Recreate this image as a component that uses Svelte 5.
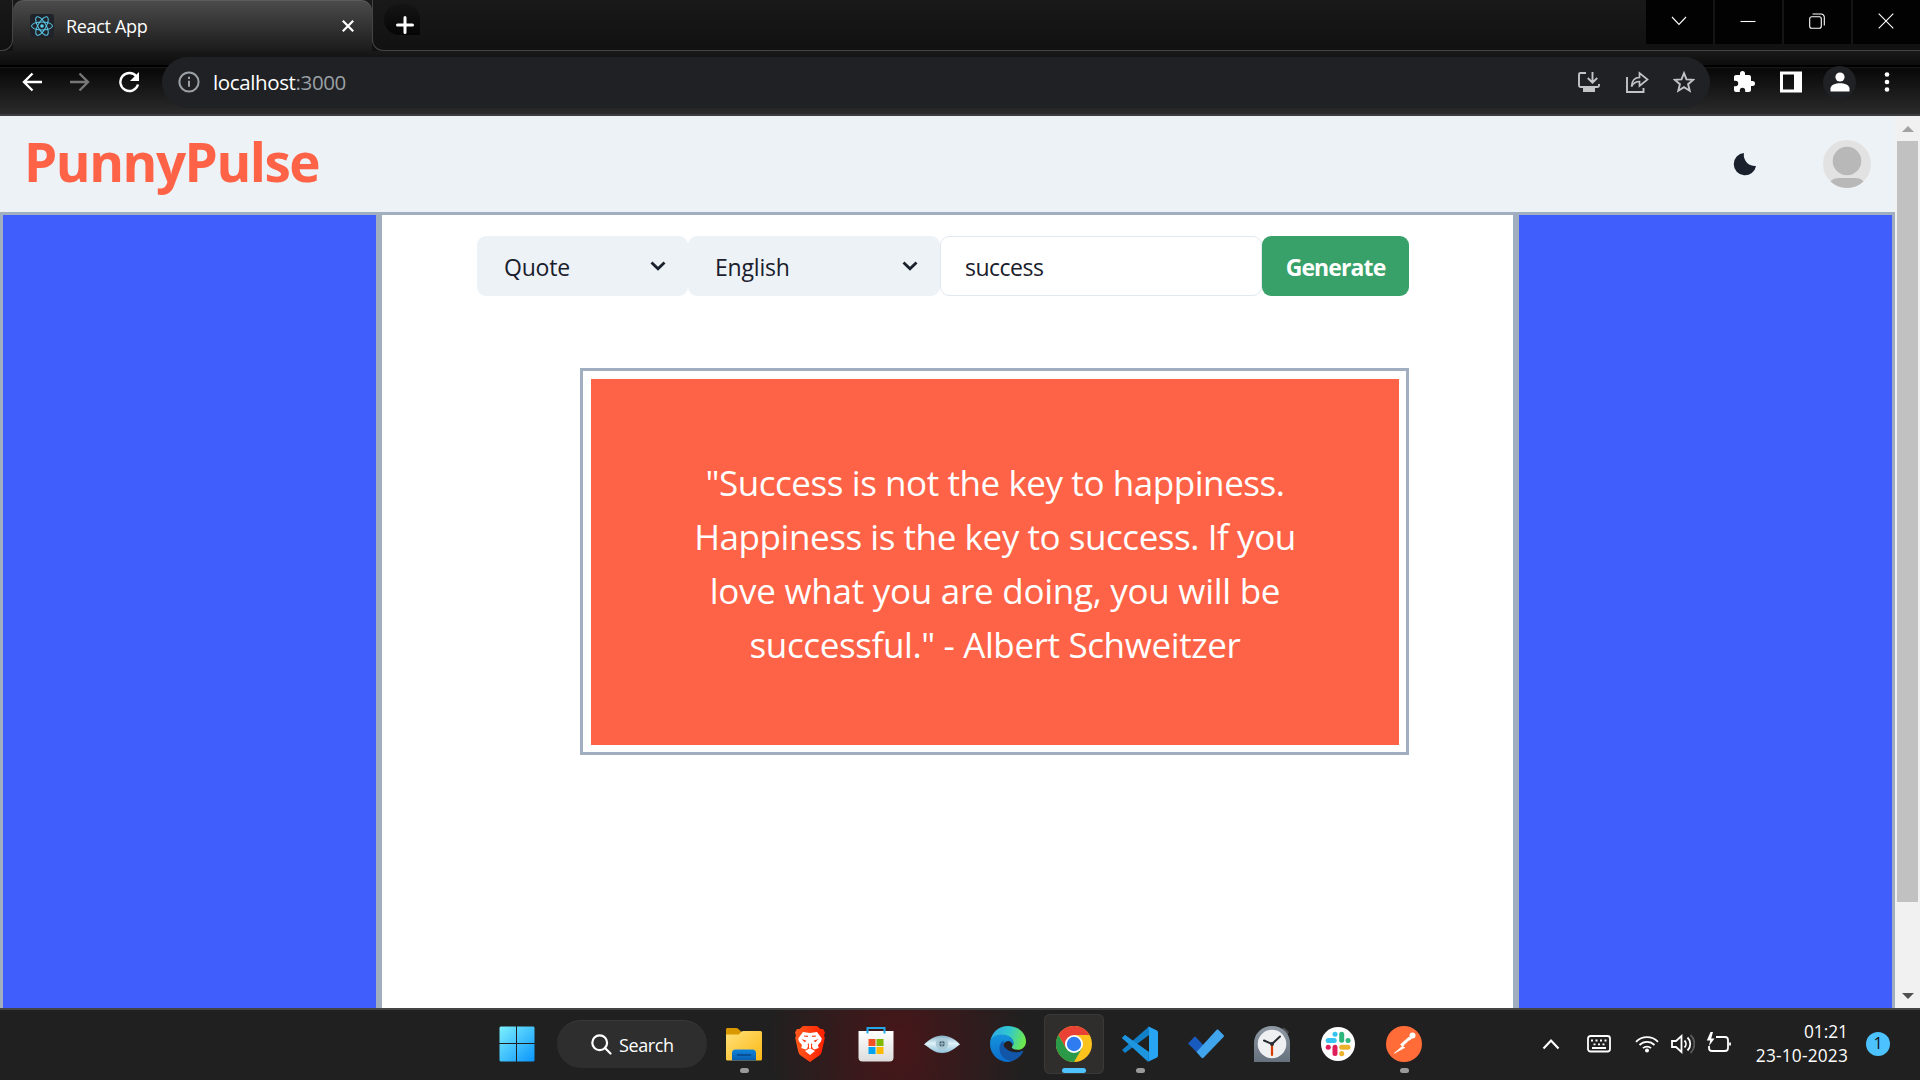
<script>
  // Tracking is in px and keeps each line at its intended measure.
  const quote = [
    { text: '"Success is not the key to happiness.', tracking: -0.43 },
    { text: 'Happiness is the key to success. If you', tracking: -0.44 },
    { text: 'love what you are doing, you will be', tracking: -0.27 },
    { text: 'successful." - Albert Schweitzer', tracking: -0.38 }
  ];
</script>

<div class="screen">
  <div class="strip">
    <div class="curve left"></div>
    <div class="tab">
      <span class="favicon">
        <svg width="24" height="24" viewBox="0 0 24 24" fill="none" stroke="#5ccfee" stroke-width="1">
          <ellipse cx="12" cy="12" rx="10.5" ry="4" />
          <ellipse cx="12" cy="12" rx="10.5" ry="4" transform="rotate(60 12 12)" />
          <ellipse cx="12" cy="12" rx="10.5" ry="4" transform="rotate(120 12 12)" />
          <circle cx="12" cy="12" r="1.8" fill="#5ccfee" stroke="none" />
        </svg>
      </span>
      <span class="tabname">React App</span>
      <svg class="close" width="14" height="14" viewBox="0 0 14 14" stroke="#fff" stroke-width="2.2"><path d="M1.8 1.8 12.2 12.2M12.2 1.8 1.8 12.2" /></svg>
    </div>
    <div class="rest">
      <div class="plus"><svg width="18" height="18" viewBox="0 0 18 18" stroke="#fff" stroke-width="3" stroke-linecap="round"><path d="M9 1.5v15M1.5 9h15" /></svg></div>
      <div class="winbtns">
        <span><svg width="16" height="16" viewBox="0 0 16 16"><path d="M1 4l7 7.500 7-7.500" /></svg></span>
        <span><svg width="16" height="16" viewBox="0 0 16 16"><path d="M.5 8.500h15" /></svg></span>
        <span><svg width="16" height="16" viewBox="0 0 16 16"><rect x=".7" y="3.700" width="11.600" height="11.600" rx="2" /><path d="M3.500 1h8.500a3.300 3.300 0 0 1 3.300 3.300v8.200" /></svg></span>
        <span><svg width="16" height="16" viewBox="0 0 16 16"><path d="M.7.7l14.600 14.600M15.300.7.7 15.300" /></svg></span>
      </div>
    </div>
  </div>

  <div class="toolbar">
    <svg width="20" height="20" viewBox="0 0 20 20" class="nav"><path d="M20 10H2M10.500 1.500 2 10l8.500 8.500" /></svg>
    <svg width="20" height="20" viewBox="0 0 20 20" class="nav dim"><path d="M0 10h18M9.500 1.500 18 10l-8.500 8.500" /></svg>
    <svg width="22" height="22" viewBox="0 0 22 22" class="nav reload"><path d="M18.500 5.500A9 9 0 1 0 20 13.500" /><path d="M21 1v9h-9z" fill="#fff" stroke="none" /></svg>
    <div class="omnibox">
      <svg width="22" height="22" viewBox="0 0 22 22" fill="none" stroke="#9aa0a6" stroke-width="2"><circle cx="11" cy="11" r="9.600" /><path d="M11 9.700v6M11 5.800v2.200" /></svg>
      <span class="url"><b>localhost</b>:3000</span>
      <div class="actions">
        <svg width="24" height="22" viewBox="0 0 24 22"><path d="M9 2H3.500A1.500 1.500 0 0 0 2 3.500v11A1.500 1.500 0 0 0 3.500 16h17a1.500 1.500 0 0 0 1.500-1.500V13M15.500 1v10M10.800 7l4.700 4.700L20.200 7" /><path d="M6 17h12v4H6z" fill="#c3c4c6" stroke="none" /></svg>
        <svg width="24" height="22" viewBox="0 0 24 22"><path d="M2 6v15h16.500v-4" /><path d="M6.500 15.500C7 9 10 6.500 14.500 6.500V2L22.500 8.500 14.500 15v-4.500c-3.500 0-6 1.500-8 5z" stroke-width="1.700" /></svg>
        <svg width="22" height="22" viewBox="0 0 22 22"><path d="M11 2.200l2.500 6.200 6.700.5-5.100 4.300 1.600 6.500L11 16.200l-5.700 3.500 1.600-6.500-5.100-4.300 6.700-.5z" stroke-width="1.900" /></svg>
      </div>
    </div>
    <div class="exts">
      <svg width="24" height="24" viewBox="0 0 24 24" fill="#fff"><path d="M20.500 11H19V7c0-1.100-.9-2-2-2h-4V3.500a2.500 2.500 0 0 0-5 0V5H4c-1.100 0-2 .9-2 2v3.800h1.500a2.700 2.700 0 0 1 0 5.400H2V20c0 1.100.9 2 2 2h3.800v-1.500a2.700 2.700 0 0 1 5.400 0V22H17c1.100 0 2-.9 2-2v-4h1.500a2.500 2.500 0 0 0 0-5z" /></svg>
      <svg width="22" height="22" viewBox="0 0 22 22"><path d="M0 .5h22v21H0zM3 3.500v15h11v-15z" fill="#fff" fill-rule="evenodd" /></svg>
      <span class="profile"><svg width="20" height="20" viewBox="0 0 20 20" fill="#fff"><circle cx="10" cy="5" r="4.600" /><path d="M.5 19.500v-3c0-3.500 5-5.300 9.500-5.300s9.500 1.800 9.500 5.300v3z" /></svg></span>
      <svg width="6" height="20" viewBox="0 0 6 20" fill="#fff"><circle cx="3" cy="2.500" r="2.300" /><circle cx="3" cy="10" r="2.300" /><circle cx="3" cy="17.500" r="2.300" /></svg>
    </div>
  </div>

  <div class="viewport">
    <div class="page">
      <header>
        <h1>PunnyPulse</h1>
        <svg class="moon" width="24" height="24" viewBox="0 0 24 24"><path d="M11 1A11.200 11.200 0 1 0 23 14 A 11 11 0 0 1 11 1z" fill="#1a202c" /></svg>
        <svg class="avatar" width="48" height="48" viewBox="0 0 48 48"><defs><clipPath id="av"><circle cx="24" cy="24" r="24" /></clipPath></defs><g clip-path="url(#av)"><path d="M0 0h48v48H0z" fill="#e2e2e2" /><circle cx="24" cy="21" r="14.300" fill="#b8b8b8" /><path d="M4 48c2-7 6-10 12-10h16c6 0 10 3 12 10z" fill="#b8b8b8" /></g></svg>
      </header>
      <div class="columns">
        <aside></aside>
        <main>
          <div class="form">
            <div class="select kind"><span>Quote</span><svg width="16" height="10" viewBox="0 0 16 10"><path d="M1.500 1.500 8 7.700l6.500-6.200" /></svg></div>
            <div class="select lang"><span>English</span><svg width="16" height="10" viewBox="0 0 16 10"><path d="M1.500 1.500 8 7.700l6.500-6.200" /></svg></div>
            <div class="input">success</div>
            <div class="button">Generate</div>
          </div>
          <div class="frame"><div class="card">{#each quote as line}<p style="letter-spacing: {line.tracking}px">{line.text}</p>{/each}</div></div>
        </main>
        <aside></aside>
      </div>
    </div>
    <div class="scroll">
      <svg width="12" height="6" viewBox="0 0 12 6"><path d="M0 6 6 0l6 6z" fill="#a3a3a3" /></svg>
      <div class="thumb"></div>
      <svg class="down" width="12" height="6" viewBox="0 0 12 6"><path d="M0 0h12L6 6z" fill="#505050" /></svg>
    </div>
  </div>

  <div class="taskbar">
    <svg width="36" height="36" viewBox="0 0 36 36" class="start"><defs><linearGradient id="win" x1="0" y1="0" x2="1" y2="1"><stop offset="0" stop-color="#7cf0ff" /><stop offset="1" stop-color="#0a95fb" /></linearGradient></defs><path d="M1.500.5H17v16.500H.5V1.500zM18 .5h16.500l1 1V17H18zM.5 18H17v17.500H1.500l-1-1zM18 18h17.500v16.500l-1 1H18z" fill="url(#win)" /></svg>
    <div class="search"><svg width="21" height="21" viewBox="0 0 21 21" fill="none" stroke="#fff" stroke-width="2.200" stroke-linecap="round"><circle cx="8.700" cy="8.700" r="7.400" /><path d="m14 14 5.500 5.500" /></svg><span>Search</span></div>
    <div class="apps">
      <div class="app"><svg viewBox="0 0 36 36"><defs><linearGradient id="fo" x1="0" y1="0" x2="1" y2="1"><stop offset="0" stop-color="#ffe17a" /><stop offset="1" stop-color="#fcb814" /></linearGradient><linearGradient id="fb" x1="0" y1="0" x2="0" y2="1"><stop offset="0" stop-color="#0f84dc" /><stop offset="1" stop-color="#0a5eae" /></linearGradient></defs><path d="M0 9V3.500C0 2.500.8 2 1.500 2H10c1 0 2 .4 2.700 1.200L15 5.500V9z" fill="#d99700" /><path d="M0 8.500h11c1.500 0 2.500-.5 3.200-1.500.8-1.200 1.600-2 3.200-2H34.500A1.500 1.500 0 0 1 36 6.500V33a1.500 1.500 0 0 1-1.500 1.500h-33A1.500 1.500 0 0 1 0 33z" fill="url(#fo)" /><path d="M6 34.500V27a3.500 3.500 0 0 1 3.500-3.500h17A3.500 3.500 0 0 1 30 27v7.500z" fill="url(#fb)" /><path d="M11 29h14" stroke="#08488c" stroke-width="1.600" /></svg><i></i></div>
      <div class="app"><svg viewBox="0 0 36 36"><defs><linearGradient id="br" x1="0" y1="0" x2="1" y2="0"><stop offset="0" stop-color="#ff5a1c" /><stop offset="1" stop-color="#ff1f00" /></linearGradient></defs><path d="m11 0-3.500 3L5 3 3 6.500 4 9.500 3.200 12l3 13.500c.5 2 1.300 3 2.500 4L18 36l9.300-6.500c1.200-1 2-2 2.500-4l3-13.500-.8-2.500 1-3L31 3l-2.500 0L25 0z" fill="url(#br)" /><path d="m11 6 7 1 7-1 4.800 6.500-.8 3-3 3.500.7 3-4.200 1.500-1.700-1-1-3 .7-1.500-2.500-1-2.500 1 .7 1.500-1 3-1.700 1L9.300 22l.7-3-3-3.500-.8-3z" fill="#fff" /><path d="m18 22 1.500 1 3.500 2-5 4-5-4 3.500-2z" fill="#fff" /><path d="m9.500 13 5 1.800-1.800 1.400zM26.500 13l-5 1.800 1.800 1.400z" fill="#fb3d18" /><path d="m12 10 4 .3M24 10l-4 .3" stroke="#fb3d18" stroke-width="1.200" /><path d="M17 14h2v8h-2z" fill="#fff" /></svg></div>
      <div class="app"><svg viewBox="0 0 36 36"><defs><linearGradient id="st" x1="0" y1="0" x2="0" y2="1"><stop offset="0" stop-color="#fff" /><stop offset="1" stop-color="#dcdcdc" /></linearGradient></defs><path d="M.5 5h35v26.500a4 4 0 0 1-4 4h-27a4 4 0 0 1-4-4z" fill="url(#st)" /><path d="M9.500 7.500V2h17v5.500" fill="none" stroke="#22a7e8" stroke-width="2" /><path d="M10.500 13h7v7h-7z" fill="#f25022" /><path d="M18.500 13h7v7h-7z" fill="#7fba00" /><path d="M10.500 21h7v7h-7z" fill="#00a4ef" /><path d="M18.500 21h7v7h-7z" fill="#ffb900" /></svg></div>
      <div class="app"><svg viewBox="0 0 36 36"><defs><linearGradient id="ey" x1="0" y1="0" x2="0" y2="1"><stop offset="0" stop-color="#83adc4" /><stop offset=".45" stop-color="#dff2f8" /><stop offset="1" stop-color="#8fc0d8" /></linearGradient></defs><path d="M0 18.500C6 13 11 9.500 18 9.500S31 13 36 18.500C31 22 26 27 18 27S6 22 0 18.500z" fill="url(#ey)" /><circle cx="18" cy="17.800" r="6.300" fill="#a9c9d6" /><circle cx="18" cy="17.800" r="2.800" fill="#48606e" /><path d="M18 14v7.600M14.200 17.800h7.600" stroke="#a9c6d2" stroke-width=".9" /></svg></div>
      <div class="app"><svg viewBox="0 0 36 36"><defs><linearGradient id="e1" x1="0" y1=".3" x2="1" y2=".5"><stop offset="0" stop-color="#2fa7e7" /><stop offset=".5" stop-color="#31c7cf" /><stop offset="1" stop-color="#6fea48" /></linearGradient><linearGradient id="e2" x1="0" y1="0" x2="0" y2="1"><stop offset="0" stop-color="#1593dc" /><stop offset="1" stop-color="#0b6dcc" /></linearGradient></defs><path d="M0 17C1 7 8 0 18 0c10.500 0 18 7.500 18 15.500 0 5-3.500 8.300-8.200 8.300-4 0-6-1.500-6-2.600 0-1 1.600-1.700 1.600-4.200C23.400 13 19 9 12 9 6 9 1.500 12 0 17z" fill="url(#e1)" /><path d="M0 18c0-6 5-9.500 11.500-9.500 7 0 12 4 12 8.500 0 1-.2 2-.6 2.700C22.500 17 20.500 15 18 15c-5 1-6.500 6-5 10 1.500 5 6.500 8 12 8-2 2-4.500 3-7 3C8 36 0 28 0 18z" fill="url(#e2)" /><path d="M14 14.500c-4 2-5.500 6.500-4 11.500 1.700 5.500 6.500 9 12 9 5.500-1.500 9-5 11.200-9.200.3-.8-.4-1.200-1.200-.8-2 1-4 1.300-6 1.300-7 0-12.500-4.500-12.500-8.300 0-1.500.3-2.500.5-3.500z" fill="#1156a8" /></svg></div>
      <div class="app active"><svg viewBox="0 0 36 36"><circle cx="18" cy="18" r="18" fill="#fcc31d" /><path d="M18 9h15.600A18 18 0 0 0 2.400 9l7.800 13.500z" fill="#e94235" /><path d="M10.200 22.500 2.400 9A18 18 0 0 0 18 36l7.800-13.500z" fill="#2a9a48" /><circle cx="18" cy="18" r="9" fill="#fff" /><circle cx="18" cy="18" r="7.200" fill="#2f7cf0" /></svg><i></i></div>
      <div class="app"><svg viewBox="0 0 36 36"><path d="m0 12 3-3 24 18v8.500z" fill="#0f7cc4" /><path d="m0 24 3 3L27 9V.5z" fill="#1180c8" /><path d="M3 9 0 12l26 23.700L27 26z" fill="#1d95df" /><path d="m26 .3 8.500 4C35.500 4.800 36 5.500 36 6.500v23c0 1-.5 1.700-1.500 2.200l-8.500 4c.8-.8 1-1.600 1-2.700V3c0-1.100-.2-1.900-1-2.700z" fill="#27a5f3" /></svg><i></i></div>
      <div class="app"><svg viewBox="0 0 36 36"><path d="m0 17.500 6-6.300c.7-.6 1.400-.6 2 0L20 24l-6 7.500z" fill="#185abd" /><path d="m8.500 26 20-22c.6-.6 1.300-.6 2 0L35.500 9c.6.700.6 1.300 0 2L15.500 31.700c-.7.600-1.300.6-2 0z" fill="#41a5ee" /></svg></div>
      <div class="app"><svg viewBox="0 0 36 36"><defs><linearGradient id="ck" x1="0" y1="0" x2="0" y2="1"><stop offset="0" stop-color="#909aa5" /><stop offset="1" stop-color="#65717d" /></linearGradient></defs><path d="m28 3 2-1.500 5 4.500-1.500 2.500z" fill="#4a4c50" /><path d="M0 17a18 17 0 0 1 36 0v19H0z" fill="url(#ck)" /><circle cx="18" cy="18" r="14.300" fill="#eff0f1" /><path d="M10 14.500 18 18l8-7.500" fill="none" stroke="#292c30" stroke-width="2" stroke-linecap="round" /><path d="M18 20v9" stroke="#d83b01" stroke-width="2.200" stroke-linecap="round" /><circle cx="18" cy="18" r="2" fill="#292c30" /></svg></div>
      <div class="app"><svg viewBox="0 0 36 36"><circle cx="18" cy="18" r="17" fill="#fff" /><g stroke-width="5" stroke-linecap="round"><path d="M8.200 14.500h6" stroke="#36c5f0" /><path d="M15 8.200h.1" stroke="#36c5f0" /><path d="M21.700 8.200v6" stroke="#2eb67d" /><path d="M28 14.500h.1" stroke="#2eb67d" /><path d="M21.700 21.300h6.300" stroke="#ecb22e" /><path d="M21.700 27.600v.1" stroke="#ecb22e" /><path d="M15 21.300v6.300" stroke="#e01e5a" /><path d="M8.200 21.300h.1" stroke="#e01e5a" /></g></svg></div>
      <div class="app"><svg viewBox="0 0 36 36"><circle cx="18" cy="18" r="18" fill="#ff6c37" /><circle cx="26.500" cy="9.500" r="3" fill="#fff" /><path d="m23 11-8.500 7.500 1.800 1.800-8 7 10.500-5.700-2.300-.8 9-8.200z" fill="#fff" stroke="#fff" stroke-width=".7" /><path d="m23.500 14.500-5.500 5" stroke="#ff6c37" /></svg><i></i></div>
    </div>
    <div class="tray">
      <svg width="18" height="12" viewBox="0 0 18 12"><path d="m1.500 10.500 7.500-8 7.500 8" stroke-width="2.200" /></svg>
      <svg class="kbd" width="24" height="18" viewBox="0 0 24 18"><rect x="1" y="1" width="22" height="15.500" rx="2.500" /><path d="M4 5.500h2M8.500 5.500h2M13 5.500h2M17.500 5.500h2M6.500 9.300h2M11 9.300h2M15.500 9.300h2M5 13h14" /></svg>
      <svg class="wifi" width="24" height="18" viewBox="0 0 24 18"><path d="M1 6.800a15.500 15.500 0 0 1 22 0M4.500 10a10.600 10.600 0 0 1 15 0M8 13.200a5.700 5.700 0 0 1 8 0" /><circle cx="12" cy="15.500" r="2" fill="#fff" stroke="none" /></svg>
      <svg class="vol" width="24" height="20" viewBox="0 0 24 20"><path d="M1 7v6h4l5.500 5V2L5 7zM13.500 6.500a5 5 0 0 1 0 7" /><path d="M16.500 3.500a9 9 0 0 1 0 13" /><path d="M19.500 1a12.500 12.500 0 0 1 0 18" stroke="#5c5c5c" /></svg>
      <svg class="bat" width="26" height="22" viewBox="0 0 26 22"><path d="M10 5h9a3 3 0 0 1 3 3v8a3 3 0 0 1-3 3H6a3 3 0 0 1-3-3v-2M24 10.500v3" /><path d="M4.500 0 .8 8.500h3.400L3 14l5.500-7.500H5.200L7 0z" fill="#fff" stroke="none" /></svg>
      <div class="clock"><span>01:21</span><span class="date">23-10-2023</span></div>
      <span class="badge">1</span>
    </div>
  </div>
</div>

<style>
  :global(body) { margin: 0; overflow: hidden; }
  .screen { width: 1920px; height: 1080px; display: flex; flex-direction: column; font-family: 'Open Sans', 'Noto Sans', sans-serif; color: #1a202c; background: #111; overflow: hidden; white-space: nowrap; }
  .screen :global(*) { box-sizing: border-box; }
  p, h1 { margin: 0; }
  svg { flex: none; display: block; }

  .strip { height: 51px; display: flex; background: linear-gradient(#191919, #111); flex: none; }
  .curve { width: 13px; border-bottom: 1px solid #454545; border-right: 1px solid #454545; border-bottom-right-radius: 11px; }
  .tab { width: 359px; display: flex; align-items: center; padding: 0 17px 1px; border-top: 1px solid #5c5c5c; border-radius: 11px 11px 0 0; background: linear-gradient(#4b4b4b, #1b1b1b); color: #fff; font-size: 18px; }
  .favicon { width: 24px; height: 24px; background: #20232a; border-radius: 3px; }
  .tabname { margin-left: 12px; letter-spacing: -.33px; }
  .close { margin-left: auto; }
  .rest { flex: 1; display: flex; justify-content: space-between; border-bottom: 1px solid #454545; border-left: 1px solid #454545; border-bottom-left-radius: 11px; }
  .plus { width: 36px; height: 31px; margin: 4px 0 0 11px; padding: 12px 0 0 12px; background: linear-gradient(#151515, #050505); border-radius: 18px 18px 0 18px; }
  .winbtns { display: flex; gap: 2px; height: 44px; background: #151515; }
  .winbtns span { width: 67px; background: #020202; display: flex; align-items: center; justify-content: center; padding: 0 2px 2px 0; }
  .winbtns svg { fill: none; stroke: #fff; stroke-width: 1.1; }

  .toolbar { height: 65px; flex: none; display: flex; align-items: center; padding: 0 0 1px 22px; border-bottom: 2px solid #3c3d40; background: linear-gradient(#191919 0, #0d0d0d 14px, #000 14px, #000 16px, #1a1a1a 16px, #080808 18px, #2a2a2a 62px); }
  .nav { fill: none; stroke: #fff; stroke-width: 2.4; margin-right: 28px; }
  .dim { stroke: #777; }
  .reload { margin-right: 22px; }
  .omnibox { width: 1548px; height: 51px; border-radius: 26px; background: #202124; display: flex; align-items: center; padding: 0 15px 0 16px; }
  .url { font-size: 20.5px; letter-spacing: -.37px; color: #9aa0a6; margin: -1px 0 0 13px; }
  .url b { font-weight: 400; color: #fff; }
  .actions { margin-left: auto; display: flex; gap: 24px; }
  .actions svg { fill: none; stroke: #c3c4c6; stroke-width: 1.9; }
  .exts { display: flex; align-items: center; margin-left: 22px; }
  .exts svg:nth-of-type(2) { margin-left: 24px; }
  .profile { width: 33px; height: 33px; border-radius: 50%; background: #202124; display: flex; align-items: center; justify-content: center; margin: 0 28px 0 21px; }

  .viewport { height: 892px; display: flex; background: #fff; flex: none; }
  .page { width: 1895px; display: flex; flex-direction: column; }
  header { height: 96px; flex: none; background: #edf2f7; display: flex; align-items: center; padding: 0 24px; }
  h1 { font-size: 53px; line-height: 92px; padding-bottom: 4px; letter-spacing: -1.47px; color: tomato; font-weight: 700; }
  .moon { margin-left: auto; }
  .avatar { margin-left: 66px; }
  .columns { flex: 1; min-height: 0; display: flex; }
  aside { width: 379px; border: 3px solid #a0aec0; border-bottom: 0; background: #3f5efb; }
  main { flex: 1; border: 3px solid #a0aec0; border-bottom: 0; padding: 21px 95px 0; background: #fff; }
  .form { display: flex; height: 60px; font-size: 23px; }
  .select { background: #edf2f7; border-radius: 9px; display: flex; align-items: center; justify-content: space-between; padding: 1px 22px 0 27px; letter-spacing: -.2px; }
  .select svg { fill: none; stroke: #1a202c; stroke-width: 2.8; margin-top: -1px; }
  .kind { width: 211px; }
  .lang { width: 252px; }
  .input { width: 322px; border: 1px solid #e2e8f0; border-radius: 9px; padding: 2px 24px 0; display: flex; align-items: center; letter-spacing: -.5px; }
  .button { width: 147px; padding-top: 1px; background: #38a169; border-radius: 9px; color: #fff; font-weight: 700; display: flex; align-items: center; justify-content: center; letter-spacing: -.9px; }
  .frame { margin: 72px 0 0 103px; width: 829px; height: 387px; border: 3px solid #a0aec0; padding: 8px 7px 7px 8px; }
  .card { height: 100%; background: #ff6347; color: #fff; padding-top: 77px; text-align: center; font-size: 35px; line-height: 54px; }
  .scroll { width: 25px; background: #f1f1f1; display: flex; flex-direction: column; align-items: center; padding-top: 10px; }
  .thumb { width: 21px; height: 761px; background: #c1c1c1; margin-top: 9px; }
  .down { margin-top: 91px; }

  .taskbar { height: 72px; flex: none; border-top: 2px solid #444; padding-bottom: 2px; background: radial-gradient(ellipse 130px 200px at 898px 50%, #471619, #202020 100%); display: flex; align-items: center; color: #fff; }
  .start { margin-left: 499px; }
  .search { width: 150px; height: 48px; margin-left: 22px; border-radius: 24px; background: #2e2e2e; border-top: 1px solid #3a3a3a; display: flex; align-items: center; padding-left: 34px; gap: 7px; font-size: 18px; letter-spacing: -.4px; }
  .apps { display: flex; margin-left: 4px; }
  .app { width: 60px; height: 60px; margin: 0 3px; border-radius: 6px; display: flex; flex-direction: column; align-items: center; padding-top: 12px; }
  .app svg { width: 36px; height: 36px; }
  .app i { width: 9px; height: 5px; border-radius: 3px; background: #9a9a9a; margin-top: 6px; }
  .active { background: #302e2d; box-shadow: inset 0 0 0 1px #3b3938; }
  .active i { width: 24px; background: #4cc2ff; }
  .tray { margin-left: auto; display: flex; align-items: center; padding-right: 30px; }
  .tray svg { fill: none; stroke: #fff; stroke-width: 1.8; }
  .kbd { margin-left: 27px; }
  .wifi { margin-left: 24px; }
  .vol { margin-left: 12px; }
  .bat { margin: -2px 0 0 11px; }
  .clock { width: 92px; margin-left: 24px; display: flex; flex-direction: column; align-items: flex-end; font-size: 17.3px; line-height: 24px; }
  .date { letter-spacing: .2px; }
  .badge { width: 24px; height: 24px; border-radius: 50%; background: #4cc2ff; color: #111; font-size: 16px; line-height: 23px; text-align: center; margin-left: 18px; }
</style>
